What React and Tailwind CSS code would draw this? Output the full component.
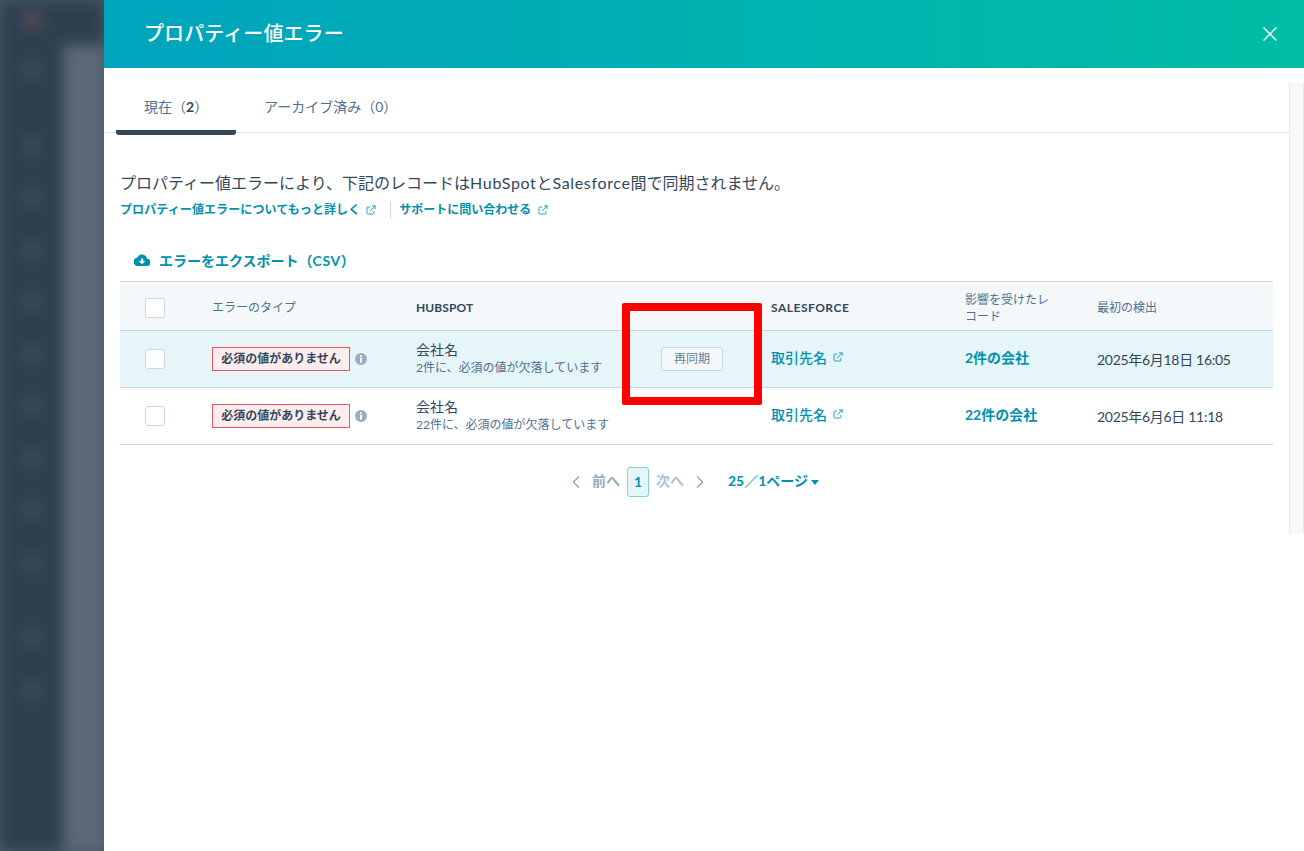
import React from "react";

const FONT = { fontFamily: '"Lato","Noto Sans CJK JP",sans-serif' };

function External({ className = "" }) {
  return (
    <svg viewBox="0 0 12 12" className={className} fill="none" stroke="currentColor" strokeWidth="1">
      <path d="M5 2.5H2a.8.8 0 0 0-.8.8v6.7c0 .4.4.8.8.8h6.7c.4 0 .8-.4.8-.8V7" />
      <path d="M7.2 1h3.8v3.8M11 1 5 7" />
    </svg>
  );
}

function Info() {
  return (
    <svg viewBox="0 0 12 12" className="ml-[5px] w-3 h-3 shrink-0">
      <circle cx="6" cy="6" r="6" fill="#99acc2" />
      <rect x="5" y="5" width="2" height="4.6" fill="#fff" />
      <rect x="5" y="2.4" width="2" height="1.8" fill="#fff" />
    </svg>
  );
}

function Check() {
  return <div className="w-5 h-5 ml-[25px] rounded-[3px] border border-[#cbd6e2] bg-white" />;
}

function Row({ active, sub, count, date, showButton }) {
  return (
    <div className={`grid grid-cols-[92px_204px_355px_194px_132px_176px] items-center h-[57px] border-b border-[#cbd6e2] ${active ? "bg-[#e5f5f8]" : "bg-white"}`}>
      <Check />
      <div className="flex items-center">
        <span className="h-6 w-[138px] flex items-center justify-center border border-[#f2545b] bg-[#fdedee] text-[12px] font-bold text-[#33475b]">必須の値がありません</span>
        <Info />
      </div>
      <div className="flex items-center">
        <div className="w-[245px]">
          <div className="text-[14px] leading-[18px] text-[#33475b]">会社名</div>
          <div className="text-[12px] leading-[18px] text-[#516f90]">{sub}</div>
        </div>
        {showButton && (
          <span className="w-[62px] h-6 flex items-center justify-center rounded-[3px] border border-[#cbd6e2] bg-[#f5f8fa] text-[12px] text-[#6b7f93]">再同期</span>
        )}
      </div>
      <div className="flex items-center pb-[4px] text-[14px] font-medium text-[#0091ae]">
        取引先名<External className="ml-[6px] w-[10px] h-[10px]" />
      </div>
      <div className="pb-[4px] text-[14px] font-bold text-[#0091ae]">{count}</div>
      <div className="text-[14px] tracking-[-0.3px] text-[#33475b] whitespace-nowrap">{date}</div>
    </div>
  );
}

function NavDots() {
  const gaps = ["mt-[32px]", "mt-[59px]", "mt-[37px]", "mt-[36px]", "mt-[36px]", "mt-[36px]", "mt-[36px]", "mt-[36px]", "mt-[36px]", "mt-[37px]", "mt-[59px]", "mt-[36px]"];
  return (
    <div className="w-[63px] h-full bg-[#2e3f50] flex flex-col items-center">
      <div className="mt-[10px] w-5 h-5 rounded-full bg-[#544c55]" />
      {gaps.map((g, i) => (
        <div key={i} className={`${g} w-4 h-4 rounded-full bg-[#3f5062]`} />
      ))}
    </div>
  );
}

export default function App() {
  return (
    <div style={FONT} className="relative flex w-[1304px] h-[851px] overflow-hidden bg-white">
      <div className="w-[104px] h-full shrink-0 overflow-hidden bg-[#4a5a6a]">
        <div className="flex w-[104px] h-full blur-[7px]">
          <NavDots />
          <div className="flex-1 flex flex-col bg-[#2e3f50]">
            <div className="h-[45px] bg-[#2e3f50]" />
            <div className="flex-1 bg-[#5c6877]" />
          </div>
        </div>
      </div>

      <div className="flex-1 flex flex-col bg-white">
        <header className="h-[68px] shrink-0 flex items-center justify-between pl-[40px] pr-[26px] bg-gradient-to-r from-[#00a4bd] to-[#00bda5]">
          <h1 className="-mt-[2px] text-[20px] font-medium tracking-[0.1px] text-white">プロパティー値エラー</h1>
          <svg viewBox="0 0 16 16" className="w-4 h-4 text-white" fill="none" stroke="currentColor" strokeWidth="1.4">
            <path d="M1.5 1.5l13 13M14.5 1.5l-13 13" />
          </svg>
        </header>

        <div className="relative flex-1 flex">
          <div className="w-[1185px] shrink-0">
            <div className="h-[65px] flex items-end pl-3 border-b border-[#dfe3eb]">
              <div className="w-[120px] h-[65px] -mb-[3px] pt-[27px] pl-[28px] border-b-[5px] border-[#33475b] rounded-b-[3px] text-[14px] leading-[20px] text-[#516f90]">
                現在（<span className="font-bold text-[#33475b]">2</span>）
              </div>
              <div className="ml-[28px] h-[50px] pt-[15px] text-[14px] leading-[20px] text-[#516f90]">アーカイブ済み（0）</div>
            </div>

            <div className="pl-4">
              <p className="mt-[39px] text-[16px] leading-[22px] text-[#33475b]">
                プロパティー値エラーにより、下記のレコードは<span className="tracking-[0.65px]">HubSpot</span>と<span className="tracking-[0.65px]">Salesforce</span>間で同期されません。
              </p>
              <div className="mt-[7px] h-[18px] flex items-center text-[12px] font-bold text-[#0091ae]">
                <span className="tracking-[0.1px]">プロパティー値エラーについてもっと詳しく</span>
                <External className="ml-[6px] w-[10px] h-[10px]" />
                <span className="ml-[14px] mr-[8px] h-[18px] border-l border-[#cbd6e2]" />
                <span>サポートに問い合わせる</span>
                <External className="ml-[7px] w-[10px] h-[10px]" />
              </div>

              <div className="mt-[30px] ml-[14px] h-[22px] flex items-center text-[14px] font-bold text-[#0091ae]">
                <svg viewBox="0 0 16 12" className="w-[16px] h-[12px] mr-[9px]" fill="currentColor">
                  <path d="M12.9 4.6A5 5 0 0 0 3.4 3.6 4.2 4.2 0 0 0 4 12h8.6a3.7 3.7 0 0 0 .3-7.4ZM8 10.2 4.8 7h2.1V4.4h2.2V7h2.1L8 10.2Z" />
                </svg>
                エラーをエクスポート（<span className="tracking-[0.6px]">CSV</span>）
              </div>

              <div className="mt-[10px] w-[1153px]">
                <div className="grid grid-cols-[92px_204px_355px_194px_132px_176px] items-center h-[50px] pt-[4px] border-y border-[#cbd6e2] bg-[#f5f8fa]">
                  <Check />
                  <div className="text-[12px] text-[#516f90]">エラーのタイプ</div>
                  <div className="text-[12px] font-bold tracking-[0.1px] text-[#33475b]">HUBSPOT</div>
                  <div className="text-[12px] font-bold tracking-[0.5px] text-[#33475b]">SALESFORCE</div>
                  <div className="text-[12px] leading-[17px] text-[#516f90] w-[90px]">影響を受けたレコード</div>
                  <div className="text-[12px] text-[#516f90]">最初の検出</div>
                </div>
                <Row active sub="2件に、必須の値が欠落しています" count="2件の会社" date="2025年6月18日 16:05" showButton />
                <Row sub="22件に、必須の値が欠落しています" count="22件の会社" date="2025年6月6日 11:18" />
              </div>

              <div className="mt-[22px] w-[1153px] pl-[451px] flex items-center h-[30px] text-[14px] leading-[18px] font-bold">
                <svg viewBox="0 0 10 16" className="w-[10px] h-[14px] text-[#7c98b6]" fill="none" stroke="currentColor" strokeWidth="1.3">
                  <path d="M8.5 1.5 2 8l6.5 6.5" />
                </svg>
                <span className="ml-[11px] pb-[2px] text-[#99acc2]">前へ</span>
                <span className="ml-[7px] w-[22px] h-[30px] flex items-center justify-center rounded-[3px] border border-[#7fd1de] bg-[#e5f5f8] text-[#0091ae]">1</span>
                <span className="ml-[7px] pb-[2px] text-[#b0c1d4]">次へ</span>
                <svg viewBox="0 0 10 16" className="ml-[11px] w-[10px] h-[14px] text-[#7c98b6]" fill="none" stroke="currentColor" strokeWidth="1.3">
                  <path d="M1.5 1.5 8 8l-6.5 6.5" />
                </svg>
                <span className="ml-[23px] pb-[2px] text-[#0091ae]">25／1ページ</span>
                <svg viewBox="0 0 8 5" className="ml-[3px] w-2 h-[5px] text-[#0091ae]" fill="currentColor"><path d="M0 0h8L4 5Z" /></svg>
              </div>
            </div>
          </div>
          <div className="mt-[15px] w-[15px] h-[451px] bg-[#f8f8f8] border-x border-[#e8e8e8]" />
        </div>
      </div>

      <div className="absolute left-[622px] top-[303px] w-[140px] h-[102px] border-[8px] border-[#ff0000] rounded-[2px]" />
    </div>
  );
}
